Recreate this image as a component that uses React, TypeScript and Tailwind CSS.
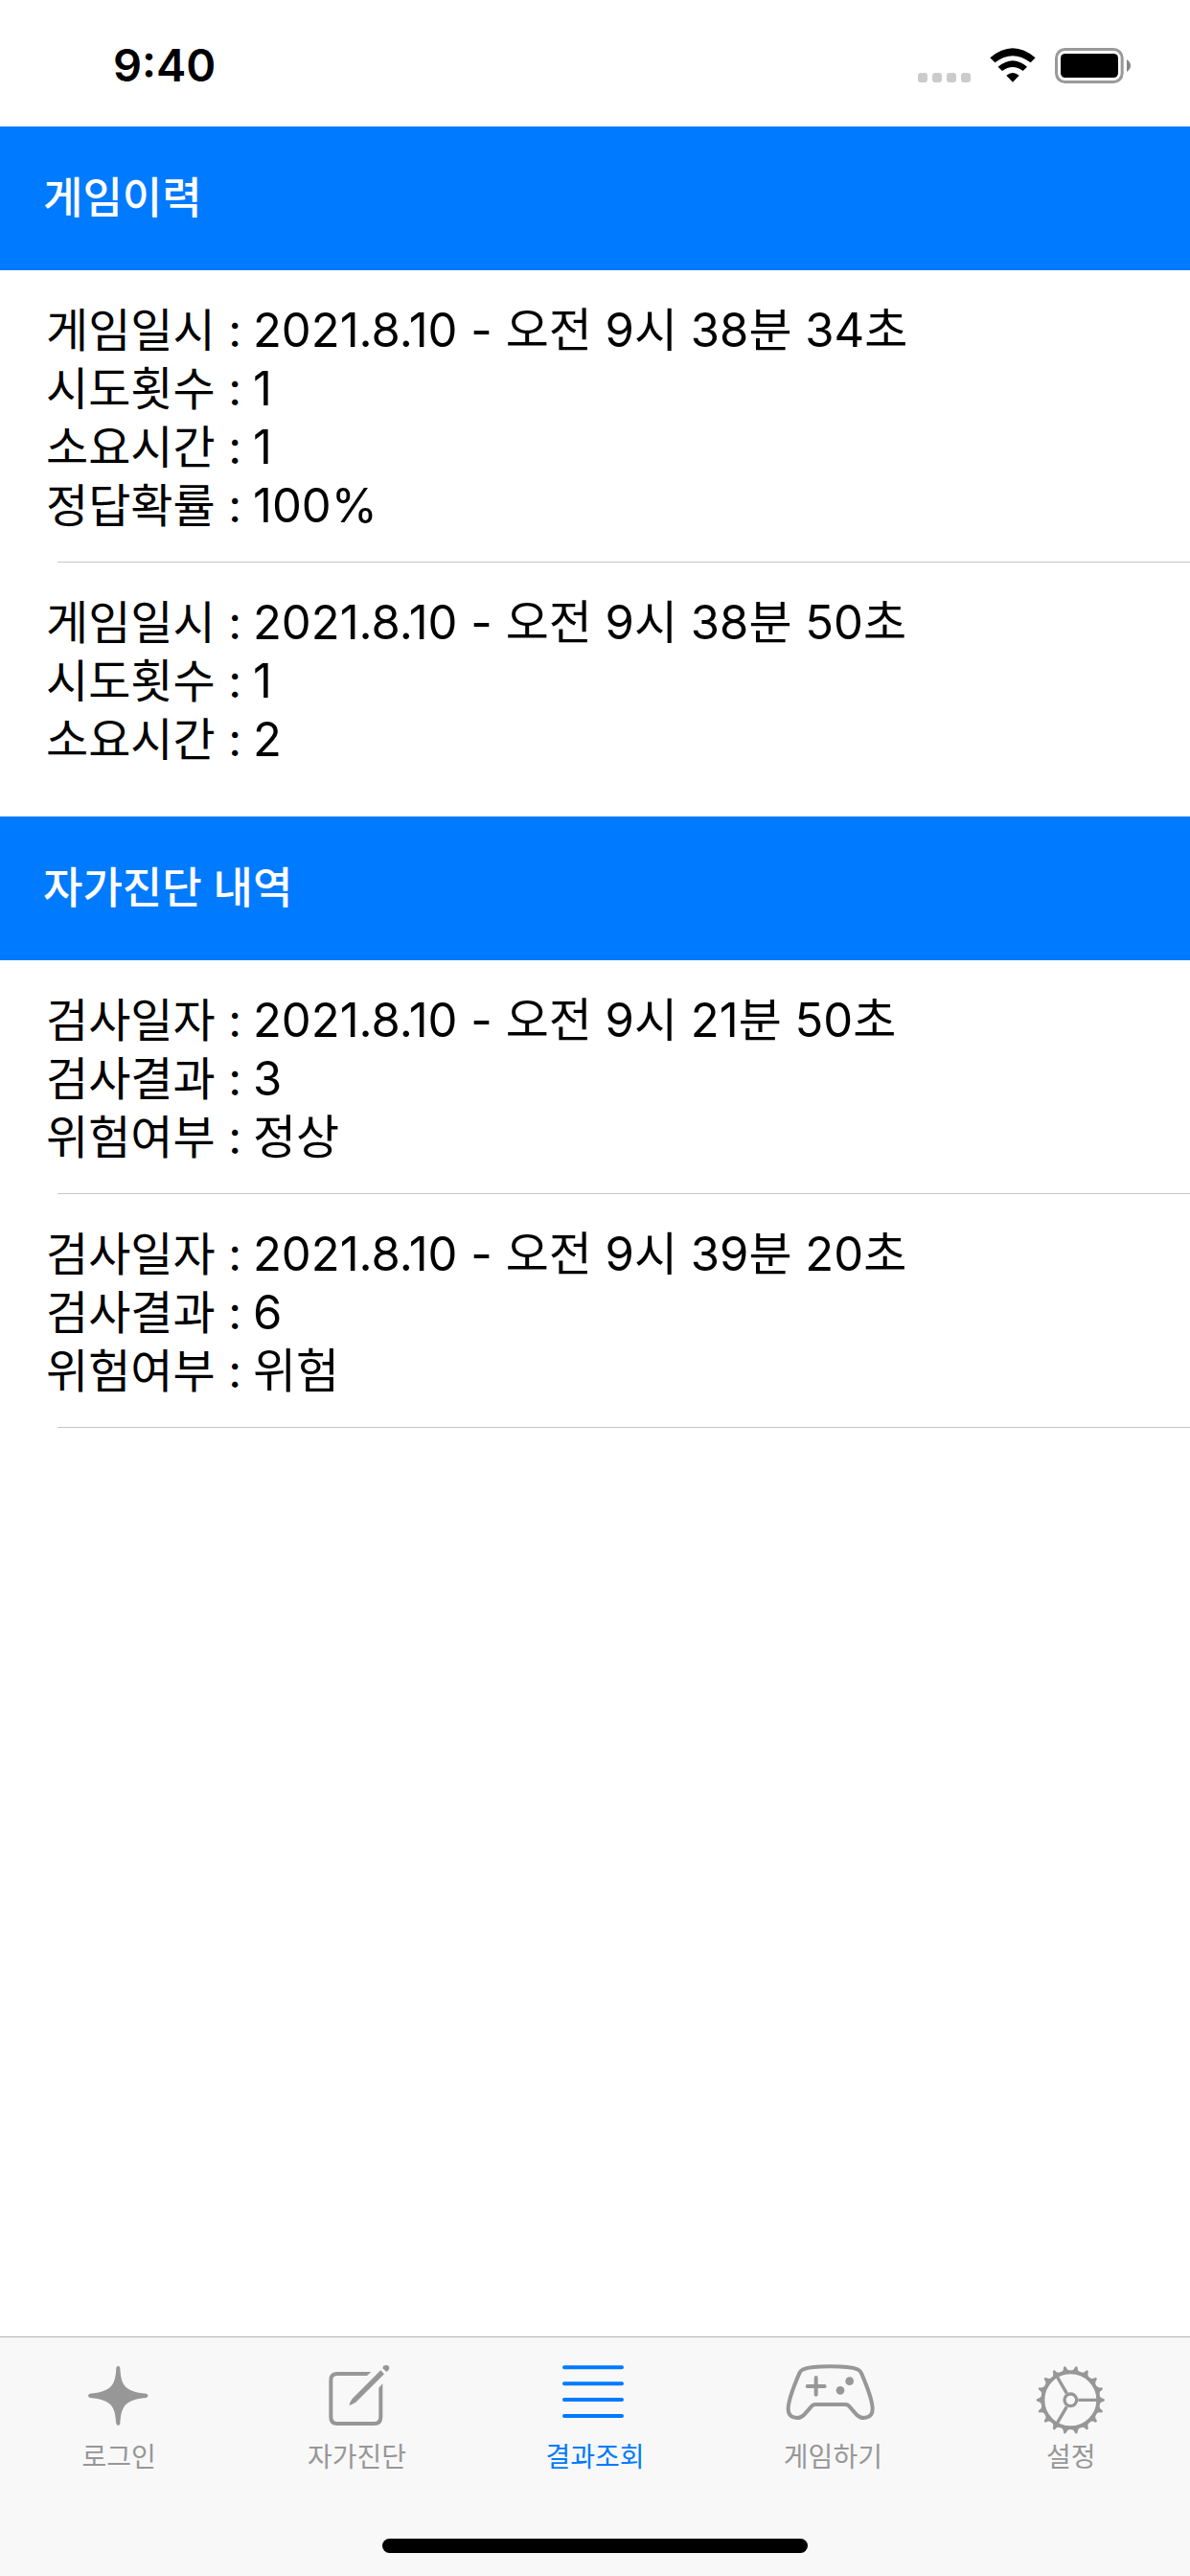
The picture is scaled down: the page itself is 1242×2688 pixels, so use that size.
import type { ReactNode } from "react";

type RecordEntry = { label: string; value: string }[];

const gameRecords: RecordEntry[] = [
  [
    { label: "게임일시", value: "2021.8.10 - 오전 9시 38분 34초" },
    { label: "시도횟수", value: "1" },
    { label: "소요시간", value: "1" },
    { label: "정답확률", value: "100%" },
  ],
  [
    { label: "게임일시", value: "2021.8.10 - 오전 9시 38분 50초" },
    { label: "시도횟수", value: "1" },
    { label: "소요시간", value: "2" },
  ],
];

const diagnosisRecords: RecordEntry[] = [
  [
    { label: "검사일자", value: "2021.8.10 - 오전 9시 21분 50초" },
    { label: "검사결과", value: "3" },
    { label: "위험여부", value: "정상" },
  ],
  [
    { label: "검사일자", value: "2021.8.10 - 오전 9시 39분 20초" },
    { label: "검사결과", value: "6" },
    { label: "위험여부", value: "위험" },
  ],
];

function StatusBar() {
  return (
    <header className="flex h-[132px] items-center justify-between pt-1 pr-[61px] pl-[118px]">
      <time className="text-[47px] leading-[60px] font-semibold">9:40</time>
      <div className="flex items-end" aria-hidden="true">
        <div className="mr-5 flex gap-[5px] pb-px">
          <span className="size-[10px] rounded-[3px] bg-[#cbcbcb]" />
          <span className="size-[10px] rounded-[3px] bg-[#cbcbcb]" />
          <span className="size-[10px] rounded-[3px] bg-[#cbcbcb]" />
          <span className="size-[10px] rounded-[3px] bg-[#cbcbcb]" />
        </div>
        <svg viewBox="0 0 144 111" className="mr-5 h-[37px] w-12">
          <path d="M1 31 Q72 -29 143 31 L128 46 Q72 3 16 46 Z" />
          <path d="M26 59 Q72 20 117 59 L104 72 Q72 48 39 72 Z" />
          <path d="M52 86 Q72 70 92 86 L72 107 Z" />
        </svg>
        <svg viewBox="0 0 240 111" className="h-[37px] w-20">
          <rect x="4.500" y="4.500" width="206" height="102" rx="27" fill="none" stroke="#999" strokeWidth="9" />
          <rect x="18" y="18" width="180" height="75" rx="14" />
          <path d="M225 36 Q237 44 237 55.500 Q237 67 225 75 Z" fill="#858585" />
        </svg>
      </div>
    </header>
  );
}

function RecordSection({ title, records, closed }: { title: string; records: RecordEntry[]; closed?: boolean }) {
  return (
    <section>
      <h2 className="flex h-[150px] items-center bg-[#007aff] px-[45px] text-[45px] font-medium text-white">{title}</h2>
      <ul>
        {records.map((record, i) => (
          <li key={i}>
            <dl className="px-12 pt-8 pb-7 leading-[61px]">
              {record.map(({ label, value }) => (
                <div key={label} className="flex gap-3">
                  <dt className="text-[48px]">{label} :</dt>
                  <dd className="text-[49px]">{value}</dd>
                </div>
              ))}
            </dl>
            {(closed || i < records.length - 1) && <div className="ml-[60px] h-px bg-[#c6c6c8]" />}
          </li>
        ))}
      </ul>
    </section>
  );
}

const gearTeeth = Array.from({ length: 18 }, (_, i) => i * 20);

const tabs: { label: string; active?: boolean; viewBox: string; icon: ReactNode }[] = [
  {
    label: "로그인",
    viewBox: "108 132 288 240",
    icon: (
      <path
        fill="currentColor"
        d="M244 152 Q250 141 256 152 C259 205 268 226 338 233 Q349 239 338 246 C268 253 260 274 256 328 Q250 338 244 328 C240 274 232 253 161 246 Q151 239 161 233 C232 226 241 205 244 152 Z"
      />
    ),
  },
  {
    label: "자가진단",
    viewBox: "854 132 288 240",
    icon: (
      <>
        <path
          d="M1028 171 H935 Q915 171 915 191 V307 Q915 327 935 327 H1051 Q1071 327 1071 307 V215"
          fill="none"
          stroke="currentColor"
          strokeWidth="12"
        />
        <path
          fill="currentColor"
          d="M1028 165 H1041 L1028 177 Z M1077 202 V216 H1065 V215 Z M1071 160 L1082 172 L993 260 Q990 263 972 270 Q976 256 982 249 Z M1077 154 Q1078 144 1088 144 Q1098 144 1098 154 Q1098 161 1089 165 Z"
        />
      </>
    ),
  },
  {
    label: "결과조회",
    active: true,
    viewBox: "129 132 288 240",
    icon: (
      <path
        d="M177 151 H357 M177 202 H357 M177 252 H357 M177 303 H357"
        stroke="currentColor"
        strokeWidth="12"
        strokeLinecap="round"
      />
    ),
  },
  {
    label: "게임하기",
    viewBox: "874 132 288 240",
    icon: (
      <>
        <g fill="none" stroke="currentColor" strokeWidth="12" strokeLinecap="round">
          <path d="M1011 148 C1050 148 1080 151 1096 157 Q1104 160 1108 169 Q1143 250 1143 281 C1143 309 1112 317 1094 300 L1072 275 Q1066 267 1058 267 H964 Q956 267 950 275 L928 300 C910 317 879 309 879 281 Q879 250 914 169 Q918 160 926 157 C942 151 972 148 1011 148 Z" />
          <path d="M939 210 H993 M966 183 V236" />
        </g>
        <circle cx="1071" cy="194" r="13" fill="currentColor" />
        <circle cx="1042" cy="223" r="13" fill="currentColor" />
      </>
    ),
  },
  {
    label: "설정",
    viewBox: "89 102 288 240",
    icon: (
      <>
        <g fill="none" stroke="currentColor" strokeWidth="12">
          <circle cx="231" cy="223" r="87" />
          <circle cx="231" cy="223" r="19" strokeWidth="10" />
          <path d="M255 223 H318 M219 202 L187.500 147.700 M219 244 L187.500 298.300" strokeWidth="10" />
        </g>
        {gearTeeth.map((angle) => (
          <path
            key={angle}
            d="M318 210 L324 213 Q327 218 335 219 Q341 223 335 227 Q327 228 324 233 L318 236 Z"
            fill="currentColor"
            transform={`rotate(${angle} 231 223)`}
          />
        ))}
      </>
    ),
  },
];

function TabBar() {
  return (
    <footer className="sticky bottom-0 mt-auto border-t border-[#b2b2b2] bg-[#f8f8f8] pb-6">
      <nav className="grid grid-cols-5 pt-[25px]">
        {tabs.map(({ label, active, viewBox, icon }) => (
          <a
            key={label}
            href="#"
            aria-current={active ? "page" : undefined}
            className={`flex flex-col items-center gap-0.5 text-[28px] leading-9 ${active ? "text-[#007aff]" : "text-[#979797]"}`}
          >
            <svg viewBox={viewBox} className="h-20 w-24 overflow-visible" aria-hidden="true">
              {icon}
            </svg>
            {label}
          </a>
        ))}
      </nav>
      <div className="mx-auto mt-[67px] h-[15px] w-[444px] rounded-full bg-black" />
    </footer>
  );
}

export default function App() {
  return (
    <div className="flex min-h-screen flex-col bg-white font-['Inter','Noto_Sans_CJK_KR',sans-serif] text-black">
      <StatusBar />
      <main className="flex flex-col gap-[22px]">
        <RecordSection title="게임이력" records={gameRecords} />
        <RecordSection title="자가진단 내역" records={diagnosisRecords} closed />
      </main>
      <TabBar />
    </div>
  );
}
